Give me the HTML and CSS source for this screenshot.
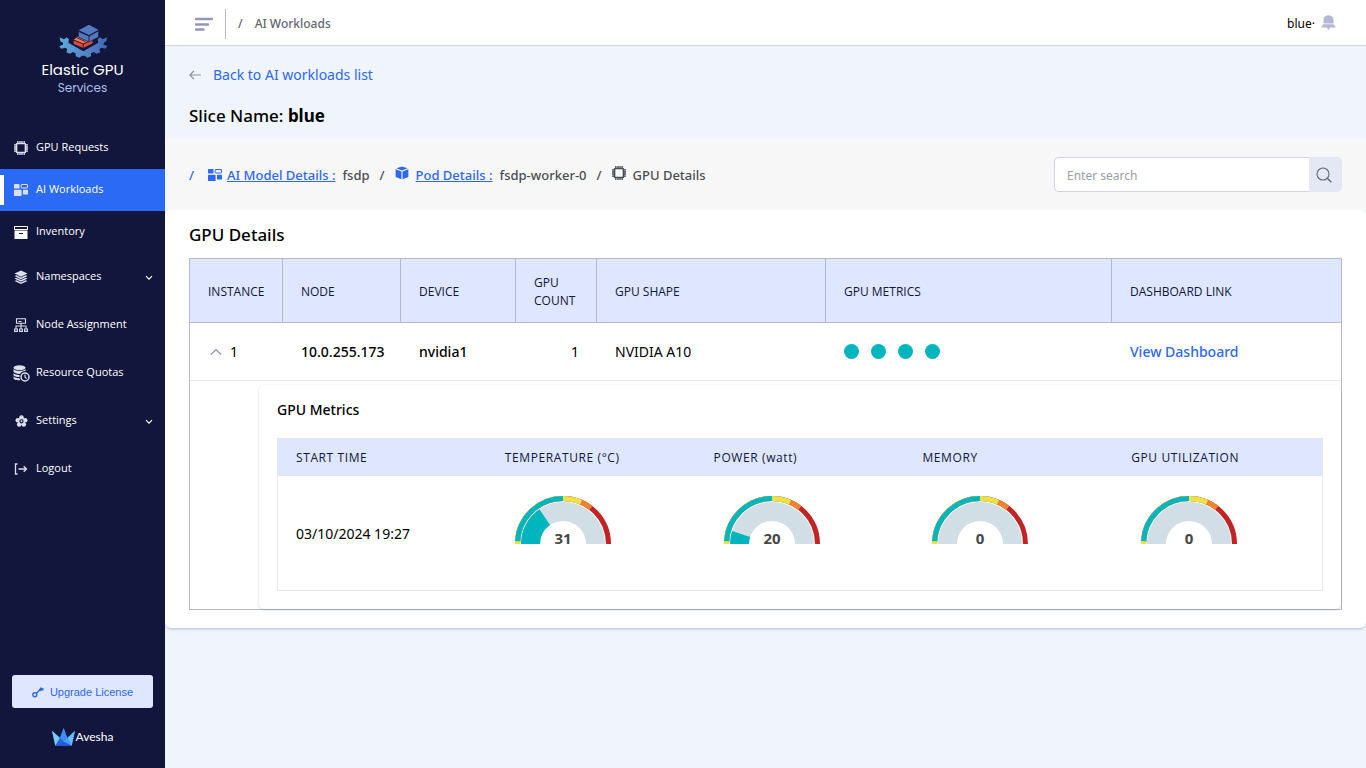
FILE: index.html
```html
<!DOCTYPE html>
<html lang="en">
<head>
  <meta charset="UTF-8">
  <meta name="viewport" content="width=device-width, initial-scale=1.0">
  <title>GPU Details</title>
  <link rel="stylesheet" href="styles.css">
</head>
<body>
  <!-- Shared icons -->
  <svg class="sprite" aria-hidden="true">
    <symbol id="icon-chip" viewBox="0 0 14 14">
      <rect x="2.5" y="2.5" width="9" height="9" rx="1" fill="none" stroke="currentColor" stroke-width="1.7"/>
      <path d="M3.8 0v2M6 0v2M8 0v2M10.2 0v2M3.8 12v2M6 12v2M8 12v2M10.2 12v2M0 3.8h2M0 6h2M0 8h2M0 10.2h2M12 3.8h2M12 6h2M12 8h2M12 10.2h2" stroke="currentColor" stroke-width="1.3"/>
    </symbol>
    <symbol id="icon-blocks" viewBox="0 0 14 14">
      <rect x="0" y="1" width="5.5" height="4.5" rx="0.6" fill="currentColor"/>
      <rect x="7.2" y="1.5" width="6.3" height="3.5" rx="0.4" fill="none" stroke="currentColor"/>
      <rect x="0" y="6.8" width="7.6" height="6.2" rx="0.6" fill="currentColor"/>
      <rect x="9" y="6.8" width="5" height="4.7" rx="0.6" fill="currentColor"/>
    </symbol>
    <symbol id="icon-down" viewBox="0 0 8 6">
      <path d="M1 1.2l3 3 3-3" fill="none" stroke="currentColor" stroke-width="1.2"/>
    </symbol>
    <symbol id="gauge-scale" viewBox="0 0 96 48">
      <path d="M2.5 48a45.5 45.5 0 0 1 91 0" class="scale scale-red"/>
      <path d="M2.5 48a45.5 45.5 0 0 1 91 0" pathLength="100" stroke-dasharray="71 100" class="scale scale-orange"/>
      <path d="M2.5 48a45.5 45.5 0 0 1 91 0" pathLength="100" stroke-dasharray="63 100" class="scale scale-yellow"/>
      <path d="M2.5 48a45.5 45.5 0 0 1 91 0" pathLength="100" stroke-dasharray="0 2 48 100" class="scale scale-teal"/>
      <path d="M15.5 48a32.5 32.5 0 0 1 65 0" class="track"/>
    </symbol>
  </svg>

  <aside class="sidebar">
    <div class="logo">
      <svg class="logo-mark" viewBox="0 0 150 102" aria-hidden="true">
        <defs>
          <linearGradient id="gear" x1="0" x2="1">
            <stop offset="0" stop-color="#5fa9dc"/>
            <stop offset="1" stop-color="#4468b4"/>
          </linearGradient>
        </defs>
        <path d="M5 40L18 46L26 40L33 46L31 56L76 82L121 56L119 46L126 40L134 46L147 40L145 52L137 56L137 62L148 66L143 74L130 71L124 76L127 85L116 89L107 84L99 88L99 97L88 101L80 95L72 95L64 101L53 97L53 88L45 84L36 89L25 85L28 76L22 71L9 74L4 66L15 62L15 56L7 52z" fill="url(#gear)"/>
        <path d="M47 48v12l29 12 28-14V46L76 59z" fill="#d84c35"/>
        <path d="M66 33L47 47l29 12 26-13z" fill="#ff7657"/>
        <path d="M47 48l29 12 28-14M76 60v12M56 41l26 12" fill="none" stroke="#13163c" stroke-width="2.5"/>
        <path d="M61 22v17l32 15 29-15V20L93 36z" fill="#5279bb" stroke="#13163c" stroke-width="2"/>
        <path d="M93 2l29 16-29 16-31-15z" fill="#5279c1"/>
        <path d="M62 21l31 14 29-16M93 35v17" fill="none" stroke="#13163c" stroke-width="2.5"/>
      </svg>
      <span class="logo-name">Elastic GPU</span>
      <span class="logo-sub">Services</span>
    </div>

    <nav class="menu">
      <a href="#" class="menu-item">
        <svg class="menu-icon" aria-hidden="true"><use href="#icon-chip"/></svg>
        <span>GPU Requests</span>
      </a>
      <a href="#" class="menu-item active">
        <svg class="menu-icon" aria-hidden="true"><use href="#icon-blocks"/></svg>
        <span>AI Workloads</span>
      </a>
      <a href="#" class="menu-item">
        <svg class="menu-icon" viewBox="0 0 14 14" aria-hidden="true">
          <path d="M.5 1.5h13v3H.5z" fill="none" stroke="#fff"/>
          <path d="M.5 5.5h13V14H.5z" fill="#fff"/>
          <path d="M5 8.5h4" stroke="#13163c"/>
        </svg>
        <span>Inventory</span>
      </a>
      <a href="#" class="menu-item tall">
        <svg class="menu-icon" viewBox="0 0 14 14" aria-hidden="true">
          <path d="M7 .5l6.5 3L7 6.7.5 3.5zM.5 6l2-.8L7 7.5l4.5-2.3 2 .8L7 9.2zM.5 8.5l2-.8L7 10l4.5-2.3 2 .8L7 11.7zM.5 11l2-.8L7 12.5l4.5-2.3 2 .8L7 14z" fill="currentColor"/>
        </svg>
        <span>Namespaces</span>
        <svg class="menu-arrow" aria-hidden="true"><use href="#icon-down"/></svg>
      </a>
      <a href="#" class="menu-item tall">
        <svg class="menu-icon" viewBox="0 0 14 14" aria-hidden="true">
          <path d="M2.5.7h9v4.5h-9zM7 5.2V11M2 11V8h10v3M.6 11h2.8v2.4H.6zM5.6 11h2.8v2.4H5.6zM10.6 11h2.8v2.4h-2.8zM4.5 3.5h3" fill="none" stroke="currentColor" stroke-width="1.1"/>
        </svg>
        <span>Node Assignment</span>
      </a>
      <a href="#" class="menu-item tall">
        <svg class="menu-icon large" viewBox="0 0 17 17" aria-hidden="true">
          <ellipse cx="6.5" cy="2.7" rx="6" ry="2.5" fill="currentColor"/>
          <path d="M.5 4c1 2.5 11 2.5 12 0v2c-3 0-5 1.5-5.5 3C4 9 1 8 .5 6.800zM.5 8.300c1 1.300 4 1.800 6 1.700v2c-3 0-5.500-.7-6-1.800zM.5 11.500c1 1.300 4 1.800 6 1.700l.8 2c-3 0-6.300-.4-6.800-1.800z" fill="currentColor"/>
          <circle cx="12" cy="12" r="4" fill="none" stroke="currentColor" stroke-width="1.5"/>
          <path d="M12 9.500V12l1.600 1.600" fill="none" stroke="currentColor" stroke-width="1.2"/>
        </svg>
        <span>Resource Quotas</span>
      </a>
      <a href="#" class="menu-item tall">
        <svg class="menu-icon" viewBox="0 0 14 14" aria-hidden="true">
          <g fill="currentColor">
            <circle cx="7.5" cy="3.5" r="2.3"/>
            <circle cx="11.2" cy="6.2" r="2.3"/>
            <circle cx="9.8" cy="10.5" r="2.3"/>
            <circle cx="5.2" cy="10.5" r="2.3"/>
            <circle cx="3.8" cy="6.2" r="2.3"/>
            <circle cx="7.5" cy="7.3" r="3.5"/>
          </g>
          <circle cx="7.5" cy="7.3" r="1.6" fill="none" stroke="#13163c" stroke-width="1.1"/>
        </svg>
        <span>Settings</span>
        <svg class="menu-arrow" aria-hidden="true"><use href="#icon-down"/></svg>
      </a>
      <a href="#" class="menu-item tall">
        <svg class="menu-icon" viewBox="0 0 14 14" aria-hidden="true">
          <path d="M3.5 2h-2v10h2M4.5 7h8M9.7 4.2L12.5 7 9.7 9.8" fill="none" stroke="currentColor" stroke-width="1.3"/>
        </svg>
        <span>Logout</span>
      </a>
    </nav>

    <div class="sidebar-bottom">
      <button type="button" class="upgrade">
        <svg class="key" viewBox="0 0 12 12" aria-hidden="true">
          <circle cx="2.8" cy="8.8" r="2" fill="none" stroke="currentColor" stroke-width="1.4"/>
          <path d="M4.3 7.4L8.5 3.2" stroke="currentColor" stroke-width="1.4"/>
          <path d="M9 1l.9 1 1.9.4-.5 2-1.7.2-.9.8-1.800-2z" fill="currentColor"/>
        </svg>
        Upgrade License
      </button>
      <div class="brand">
        <svg class="crown" viewBox="0 0 69 54" aria-hidden="true">
          <path d="M0 8l24 22 11-30 11 30L69 8 59 53H10z" fill="#3479f0"/>
          <path d="M0 8l24 22-14 23z" fill="#77c9ff"/>
          <path d="M69 8L46 30l13 23z" fill="#69bdfb"/>
          <path d="M35 0L24 30l11 11 11-11z" fill="#3d8cff"/>
          <path d="M24 30l11 11-25 12z" fill="#2a65d5"/>
          <path d="M46 30L35 41l24 12z" fill="#4c9ef3"/>
          <path d="M35 41L10 53h49z" fill="#2455dc"/>
        </svg>
        <span>Avesha</span>
      </div>
    </div>
  </aside>

  <div class="page">
    <header class="topbar">
      <button type="button" class="icon-button" aria-label="Toggle menu">
        <svg class="burger" viewBox="0 0 18 14" aria-hidden="true">
          <path d="M1 2h16M1 7.5h12M1 12.500h7.500" stroke="currentColor" stroke-width="2.4" stroke-linecap="round"/>
        </svg>
      </button>
      <div class="crumb"><span>/</span><span>AI Workloads</span></div>
      <div class="user">
        <span>blue·</span>
        <button type="button" class="icon-button" aria-label="Notifications">
          <svg class="bell" viewBox="0 0 15 15" aria-hidden="true">
            <path d="M2.5 8.5V5.200C2.500 2 4.500.2 7.500.2s5 1.800 5 5v3.300zM2.300 9.300h10.400L15 12.500H9.300L7.500 15l-1.800-2.500H0z" fill="currentColor"/>
          </svg>
        </button>
      </div>
    </header>

    <main>
      <section class="intro">
        <a href="#" class="back">
          <svg class="back-arrow" viewBox="0 0 12 10" aria-hidden="true">
            <path d="M12 5H1M4.800 1L.9 5l3.900 4" fill="none" stroke="currentColor" stroke-width="1.2"/>
          </svg>
          Back to AI workloads list
        </a>
        <h1>Slice Name: <b>blue</b></h1>
      </section>

      <section class="toolbar">
        <nav class="path" aria-label="Breadcrumb">
          <span class="slash blue">/</span>
          <svg class="path-icon blue" aria-hidden="true"><use href="#icon-blocks"/></svg>
          <a href="#">AI Model Details :</a>
          <span class="path-value">fsdp</span>
          <span class="slash">/</span>
          <svg class="path-icon blue raised" viewBox="0 0 15 14" aria-hidden="true">
            <path d="M7.5 0l6 2-6 2.300-6-2.300zM.7 3l6.200 2.500v8.300L.7 11.300zM14.300 3L8.100 5.500v8.300l6.200-2.500z" fill="currentColor"/>
          </svg>
          <a href="#">Pod Details :</a>
          <span class="path-value">fsdp-worker-0</span>
          <span class="slash">/</span>
          <svg class="path-icon raised" aria-hidden="true"><use href="#icon-chip"/></svg>
          <span>GPU Details</span>
        </nav>
        <form class="search">
          <input type="search" placeholder="Enter search" aria-label="Search">
          <button type="submit" aria-label="Search">
            <svg viewBox="0 0 16 16" aria-hidden="true">
              <circle cx="7" cy="7" r="6" fill="none" stroke="currentColor" stroke-width="1.1"/>
              <path d="M11.3 11.3l4 4" stroke="currentColor" stroke-width="1.5"/>
            </svg>
          </button>
        </form>
      </section>

      <section class="panel">
        <h2>GPU Details</h2>
        <table class="gpu-table">
          <colgroup>
            <col class="col-instance">
            <col class="col-node">
            <col class="col-device">
            <col class="col-count">
            <col class="col-shape">
            <col class="col-metrics">
            <col class="col-link">
          </colgroup>
          <thead>
            <tr>
              <th>INSTANCE</th>
              <th>NODE</th>
              <th>DEVICE</th>
              <th>GPU COUNT</th>
              <th>GPU SHAPE</th>
              <th>GPU METRICS</th>
              <th>DASHBOARD LINK</th>
            </tr>
          </thead>
          <tbody>
            <tr class="gpu-row">
              <td>
                <button type="button" class="expand" aria-expanded="true">
                  <svg viewBox="0 0 12 8" aria-hidden="true">
                    <path d="M1 6.5l5-5 5 5" fill="none" stroke="#8f90a6" stroke-width="1.2"/>
                  </svg>
                  1
                </button>
              </td>
              <td class="strong">10.0.255.173</td>
              <td class="strong">nvidia1</td>
              <td class="number">1</td>
              <td>NVIDIA A10</td>
              <td>
                <div class="dots"><i></i><i></i><i></i><i></i></div>
              </td>
              <td><a href="#">View Dashboard</a></td>
            </tr>
            <tr>
              <td colspan="7" class="details">
                <div class="card">
                  <h3>GPU Metrics</h3>
                  <table class="metrics">
                    <thead>
                      <tr>
                        <th>START TIME</th>
                        <th>TEMPERATURE (°C)</th>
                        <th>POWER (watt)</th>
                        <th>MEMORY</th>
                        <th>GPU UTILIZATION</th>
                      </tr>
                    </thead>
                    <tbody>
                      <tr>
                        <td>03/10/2024 19:27</td>
                        <td>
                          <svg class="gauge" viewBox="0 0 96 48">
                            <use href="#gauge-scale"/>
                            <path d="M15.5 48a32.5 32.5 0 0 1 65 0" pathLength="100" stroke-dasharray="31 100" class="fill"/>
                            <text x="48" y="48">31</text>
                          </svg>
                        </td>
                        <td>
                          <svg class="gauge" viewBox="0 0 96 48">
                            <use href="#gauge-scale"/>
                            <path d="M15.5 48a32.5 32.5 0 0 1 65 0" pathLength="100" stroke-dasharray="10 100" class="fill"/>
                            <text x="48" y="48">20</text>
                          </svg>
                        </td>
                        <td>
                          <svg class="gauge" viewBox="0 0 96 48">
                            <use href="#gauge-scale"/>
                            <text x="48" y="48">0</text>
                          </svg>
                        </td>
                        <td>
                          <svg class="gauge" viewBox="0 0 96 48">
                            <use href="#gauge-scale"/>
                            <text x="48" y="48">0</text>
                          </svg>
                        </td>
                      </tr>
                    </tbody>
                  </table>
                </div>
              </td>
            </tr>
          </tbody>
        </table>
      </section>
    </main>
  </div>
</body>
</html>
```

FILE: styles.css
```css
/* Reset */
* {
  box-sizing: border-box;
  margin: 0;
  padding: 0;
}

body {
  display: flex;
  min-height: 100vh;
  background-color: #eff4fd;
  color: #000;
  font-family: 'Segoe UI', 'Noto Sans', 'Open Sans', sans-serif;
  font-size: 14px;
}

a {
  color: #2d68f8;
  text-decoration: none;
}

button {
  border: none;
  background: none;
  color: inherit;
  font: inherit;
  cursor: pointer;
}

svg {
  flex: none;
}

.sprite {
  position: absolute;
  width: 0;
  height: 0;
}

/* Sidebar */
.sidebar {
  display: flex;
  flex-direction: column;
  flex: none;
  width: 165px;
  background-color: #13163c;
  color: #fff;
}

.logo {
  display: flex;
  flex-direction: column;
  align-items: center;
  height: 127px;
  padding-top: 24px;
}

.logo-mark {
  width: 50px;
  height: 34px;
}

.logo-name {
  margin-top: 2px;
  font-family: Poppins, Inter, sans-serif;
  font-size: 15px;
  line-height: 20px;
}

.logo-sub {
  color: #a9bfea;
  font-family: Poppins, Inter, sans-serif;
  font-size: 12px;
  line-height: 16px;
}

.menu-item {
  display: flex;
  align-items: center;
  gap: 8px;
  height: 42px;
  padding: 0 12px 4px 14px;
  color: #fff;
  font-family: 'Segoe UI', 'Open Sans', sans-serif;
  font-size: 11px;
}

.menu-item.tall {
  height: 48px;
}

.menu-item.active {
  background: linear-gradient(#fff, #fff) left center / 4px 30px no-repeat #2a6af5;
}

.menu-icon {
  width: 14px;
  height: 14px;
  margin-top: 4px;
  color: #dcdeea;
}

.menu-icon.large {
  width: 17px;
  height: 17px;
  margin: 4px -2px 0 -1px;
}

.menu-arrow {
  width: 8px;
  height: 6px;
  margin-top: 6px;
  margin-left: auto;
}

.sidebar-bottom {
  margin-top: auto;
  padding: 0 12px 19px;
}

.upgrade {
  display: flex;
  align-items: center;
  justify-content: center;
  gap: 6px;
  width: 100%;
  height: 33px;
  border-radius: 3px;
  background-color: #dee7ff;
  color: #2d68f8;
  font-family: 'Liberation Sans', sans-serif;
  font-size: 11px;
}

.key {
  width: 12px;
  height: 12px;
}

.brand {
  display: flex;
  align-items: center;
  justify-content: center;
  gap: 1px;
  margin-top: 17px;
  font-family: Lato, sans-serif;
  font-size: 12px;
  line-height: 24px;
}

.crown {
  width: 23px;
  height: 18px;
}

/* Top bar */
.page {
  flex: 1;
  min-width: 0;
}

.topbar {
  display: flex;
  align-items: center;
  height: 46px;
  padding: 2px 30px 0;
  border-bottom: 1px solid #d1d3dc;
  background-color: #fff;
}

.icon-button {
  display: flex;
}

.burger {
  width: 18px;
  height: 14px;
  color: #9495b8;
}

.crumb {
  display: flex;
  align-items: center;
  gap: 12px;
  height: 30px;
  margin-left: 12px;
  padding-left: 12px;
  border-left: 1px solid #b6b7d5;
  color: #65676f;
  font-size: 12px;
  font-weight: 500;
}

.user {
  display: flex;
  align-items: center;
  gap: 6px;
  margin-left: auto;
  font-size: 12px;
}

.bell {
  width: 15px;
  height: 15px;
  margin-bottom: 2px;
  color: #b6b7d5;
}

/* Page heading */
.intro {
  padding: 18px 24px 11px;
}

.back {
  display: inline-flex;
  align-items: center;
  gap: 12px;
  line-height: 22px;
}

.back-arrow {
  width: 12px;
  height: 10px;
  color: #8f90a0;
}

h1 {
  margin-top: 18px;
  font-size: 17px;
  font-weight: 500;
  line-height: 24px;
}

.toolbar {
  display: flex;
  align-items: center;
  justify-content: space-between;
  height: 71px;
  padding: 0 24px;
  background-color: #f7f7f7;
}

.path {
  display: flex;
  align-items: center;
  color: #4b4d55;
  font-size: 13px;
  font-weight: 500;
}

.path a {
  text-decoration: underline;
}

.path-icon {
  width: 14px;
  height: 14px;
  margin-right: 5px;
}

.path-icon.raised {
  margin-right: 7px;
  margin-bottom: 4px;
}

.path .blue {
  color: #2d68f8;
}

.path-value {
  margin-left: 7px;
}

.slash {
  margin: 0 10px;
}

.slash.blue {
  margin: 0 14px 0 0;
}

.search {
  display: flex;
  width: 288px;
  height: 35px;
}

.search input {
  flex: 1;
  min-width: 0;
  padding: 2px 12px 0;
  border: 1px solid #d1d3e0;
  border-right: none;
  border-radius: 5px 0 0 5px;
  background-color: #fff;
  font: inherit;
  font-size: 12px;
}

.search input::placeholder {
  color: #9a9da8;
}

.search button {
  width: 33px;
  padding-right: 3px;
  border-radius: 0 5px 5px 0;
  background-color: #e4e7f4;
  color: #65677a;
}

.search svg {
  display: block;
  width: 16px;
  height: 16px;
  margin: auto;
}

/* Details panel */
.panel {
  padding: 12px 24px 18px;
  border-radius: 6px;
  background-color: #fff;
  box-shadow: 0 2px 3px -1px rgba(40, 50, 80, 0.3);
}

h2 {
  margin-bottom: 11px;
  font-size: 17px;
  font-weight: 500;
  line-height: 25px;
}

.gpu-table {
  width: 100%;
  border: 1px solid #b6b7d5;
  border-spacing: 0;
  table-layout: fixed;
}

.col-instance { width: 93px; }
.col-node { width: 118px; }
.col-device { width: 115px; }
.col-count { width: 81px; }
.col-shape { width: 229px; }
.col-metrics { width: 286px; }
.col-link { width: 229px; }

.gpu-table th {
  height: 64px;
  padding: 2px 18px 0;
  border-right: 1px solid #b6b7d5;
  border-bottom: 1px solid #b6b7d5;
  background-color: #dee7ff;
  color: #13163c;
  font-family: 'Segoe UI', 'Open Sans', sans-serif;
  font-size: 12px;
  font-weight: 400;
  line-height: 18px;
  text-align: left;
}

.gpu-table th:last-child {
  border-right: none;
}

.gpu-row td {
  height: 58px;
  padding: 0 18px;
  border-bottom: 1px solid #e5e6e9;
}

.gpu-row .strong,
.gpu-row a {
  font-weight: 500;
}

.gpu-row .number {
  text-align: right;
}

.expand {
  display: flex;
  align-items: center;
  gap: 8px;
  margin-left: 2px;
}

.expand svg {
  width: 12px;
  height: 8px;
}

.dots {
  display: flex;
  gap: 12px;
}

.dots i {
  width: 15px;
  height: 15px;
  border-radius: 50%;
  background-color: #00b5bd;
}

/* Expanded metrics card */
.details {
  padding: 4px 0 0 69px;
}

.card {
  padding: 13px 18px 18px;
  border-radius: 6px;
  background-color: #fff;
  box-shadow: 0 1px 3px rgba(40, 50, 80, 0.2);
}

h3 {
  margin-bottom: 16px;
  font-size: 14px;
  font-weight: 500;
  line-height: 24px;
}

.metrics {
  width: 100%;
  border: 1px solid #e5e6e9;
  border-spacing: 0;
  table-layout: fixed;
}

.metrics th {
  height: 37px;
  padding: 0 18px;
  border: none;
  letter-spacing: 0.05em;
}

.metrics td {
  height: 114px;
  padding: 0 18px;
}

.gauge {
  display: block;
  width: 96px;
  height: 48px;
  margin: 0 0 26px 10px;
  overflow: visible;
}

.scale,
.track,
.fill {
  fill: none;
}

.scale { stroke-width: 5; }
.scale-red { stroke: #c12424; }
.scale-orange { stroke: #f0832f; }
.scale-yellow { stroke: #e8e34b; }
.scale-teal { stroke: #00b5bd; }

.track,
.fill {
  stroke: #d2dee6;
  stroke-width: 19;
}

.fill {
  stroke: #00b5bd;
}

.gauge text {
  fill: #464646;
  font-size: 15px;
  font-weight: 700;
  text-anchor: middle;
}
```
